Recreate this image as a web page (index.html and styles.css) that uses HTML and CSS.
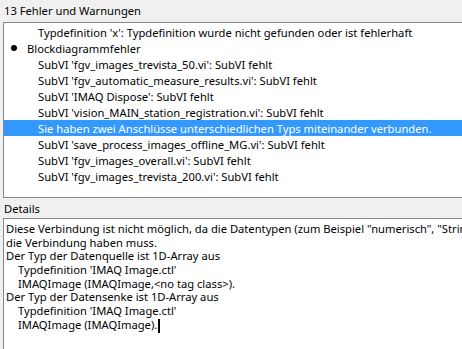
FILE: index.html
```html
<!DOCTYPE html>
<html>

<head>
  <meta charset="UTF-8">
  <meta name="viewport" content="width=device-width, initial-scale=1.0">
  <title>Fehlerliste</title>
  <link rel="stylesheet" href="styles.css">
</head>

<body>
  <div id="window">
    <div class="caption">13 Fehler und Warnungen</div>
    <ul id="errorList">
      <li class="item sub">Typdefinition 'x': Typdefinition wurde nicht gefunden oder ist fehlerhaft</li>
      <li class="item group"><span class="dot"></span>Blockdiagrammfehler</li>
      <li class="item sub">SubVI 'fgv_images_trevista_50.vi': SubVI fehlt</li>
      <li class="item sub">SubVI 'fgv_automatic_measure_results.vi': SubVI fehlt</li>
      <li class="item sub">SubVI 'IMAQ Dispose': SubVI fehlt</li>
      <li class="item sub">SubVI 'vision_MAIN_station_registration.vi': SubVI fehlt</li>
      <li class="item sub selected">Sie haben zwei Anschlüsse unterschiedlichen Typs miteinander verbunden.</li>
      <li class="item sub">SubVI 'save_process_images_offline_MG.vi': SubVI fehlt</li>
      <li class="item sub">SubVI 'fgv_images_overall.vi': SubVI fehlt</li>
      <li class="item sub">SubVI 'fgv_images_trevista_200.vi': SubVI fehlt</li>
    </ul>
    <div class="caption detailsCaption">Details</div>
    <div id="details">
      <div class="line">Diese Verbindung ist nicht möglich, da die Datentypen (zum Beispiel "numerisch", "String" oder "Array") für</div>
      <div class="line">die Verbindung haben muss.</div>
      <div class="line">Der Typ der Datenquelle ist 1D-Array aus</div>
      <div class="line indent">Typdefinition 'IMAQ Image.ctl'</div>
      <div class="line indent">IMAQImage (IMAQImage,&lt;no tag class&gt;).</div>
      <div class="line">Der Typ der Datensenke ist 1D-Array aus</div>
      <div class="line indent">Typdefinition 'IMAQ Image.ctl'</div>
      <div class="line indent">IMAQImage (IMAQImage).<span class="caret"></span></div>
    </div>
  </div>
</body>

</html>
```

FILE: styles.css
```css
body {
  font-family: 'Noto Sans', 'Open Sans', sans-serif;
  font-size: 11.2px;
  margin: 0;
  padding: 0;
  background-color: #f0f0f0;
  color: #000;
  overflow: hidden;
}

#window {
  display: flex;
  flex-direction: column;
  height: 349px;
}

.caption {
  height: 22px;
  line-height: 22px;
  padding-left: 4px;
  white-space: nowrap;
}

#errorList {
  list-style: none;
  margin: 0 0 0 3px;
  padding: 1px 0 0 0;
  height: 173px;
  background-color: #fff;
  border-top: 1px solid #828790;
  border-left: 1px solid #828790;
  border-bottom: 1px solid #828790;
  overflow: hidden;
}

.item {
  display: flex;
  align-items: center;
  height: 16px;
  white-space: nowrap;
}

.item.sub {
  padding-left: 34px;
}

.item.group {
  padding-left: 7px;
}

.dot {
  width: 6px;
  height: 6px;
  border-radius: 50%;
  background-color: #000;
  margin-right: 10px;
}

.item.selected {
  background-color: #3399ff;
  color: #fff;
}

.detailsCaption {
  height: 20px;
  line-height: 22px;
}

#details {
  flex: 1;
  margin-left: 3px;
  padding: 3px 0 0 2px;
  background-color: #fff;
  border-top: 1px solid #828790;
  border-left: 1px solid #828790;
  overflow: hidden;
}

.line {
  height: 13.7px;
  line-height: 13.7px;
  white-space: nowrap;
}

.line.indent {
  padding-left: 12px;
}

.caret {
  display: inline-block;
  width: 2px;
  height: 14px;
  background-color: #000;
  vertical-align: middle;
  margin-left: 1px;
}
```
